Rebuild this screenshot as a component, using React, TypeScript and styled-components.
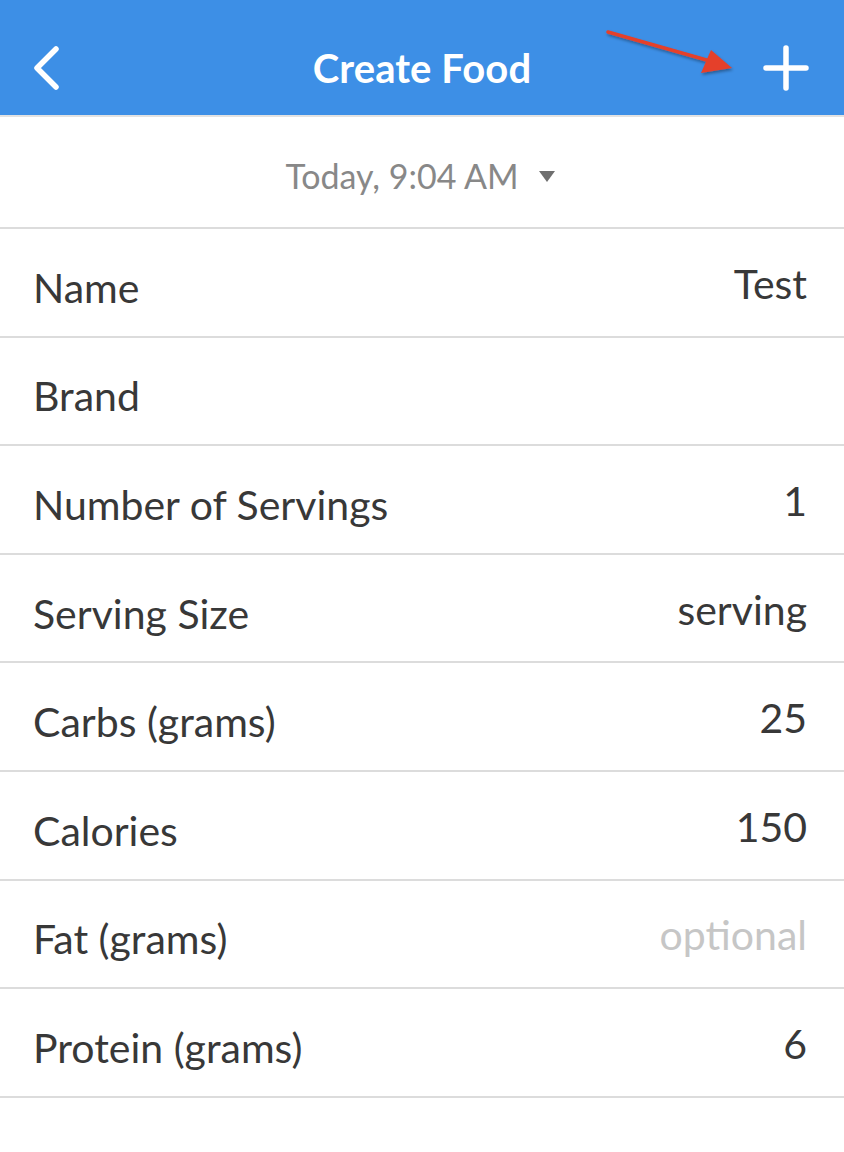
import * as React from 'react'
import styled, { createGlobalStyle } from 'styled-components'

interface Field {
  label: string
  value?: string
  placeholder?: string
}

const fields: Field[] = [
  { label: 'Name', value: 'Test' },
  { label: 'Brand' },
  { label: 'Number of Servings', value: '1' },
  { label: 'Serving Size', value: 'serving' },
  { label: 'Carbs (grams)', value: '25' },
  { label: 'Calories', value: '150' },
  { label: 'Fat (grams)', placeholder: 'optional' },
  { label: 'Protein (grams)', value: '6' },
]

const GlobalStyle = createGlobalStyle`
  html, body {
    margin: 0;
    padding: 0;
    background: #ffffff;
  }
  body {
    font-family: Lato, 'Open Sans', sans-serif;
    -webkit-font-smoothing: antialiased;
  }
`

const App: React.FC = () => {
  return (
    <>
      <GlobalStyle />
      <Screen>
        <Header>
          <IconButton aria-label="Back">
            <svg width="32" height="46" viewBox="0 0 32 46" fill="none">
              <path d="M26 4 L7 23 L26 42" stroke="#fff" strokeWidth="5.5" strokeLinecap="round" strokeLinejoin="round" />
            </svg>
          </IconButton>
          <Title>Create Food</Title>
          <IconButton aria-label="Add">
            <svg width="46" height="46" viewBox="0 0 46 46" fill="none">
              <path d="M23 3 V43 M3 23 H43" stroke="#fff" strokeWidth="5.5" strokeLinecap="round" />
            </svg>
          </IconButton>
          <Annotation width="140" height="60" viewBox="0 0 140 60">
            <defs>
              <filter id="shadow" x="-10%" y="-30%" width="120%" height="160%">
                <feDropShadow dx="1" dy="2" stdDeviation="1.5" floodColor="#000" floodOpacity="0.35" />
              </filter>
            </defs>
            <g filter="url(#shadow)">
              <line x1="8" y1="7" x2="110" y2="36" stroke="#e5402a" strokeWidth="3.5" strokeLinecap="round" />
              <polygon points="132,43 101,48 111,25" fill="#e5402a" />
            </g>
          </Annotation>
        </Header>

        <DateRow>
          <DateText>Today, 9:04 AM</DateText>
          <Caret />
        </DateRow>

        {fields.map((f) => (
          <Row key={f.label}>
            <Label>{f.label}</Label>
            {f.value ? <Value>{f.value}</Value> : f.placeholder ? <Value $muted>{f.placeholder}</Value> : null}
          </Row>
        ))}
      </Screen>
    </>
  )
}

export default App

const Screen = styled.div`
  width: 844px;
  min-height: 1152px;
  background: #ffffff;
  display: flex;
  flex-direction: column;
`

const Header = styled.header`
  position: relative;
  height: 117px;
  background: #3d8fe6;
  display: flex;
  align-items: center;
  justify-content: space-between;
  padding: 20px 35px 0 30px;
  box-sizing: border-box;
  border-bottom: 2px solid #e2e2e2;
`

const IconButton = styled.button`
  background: none;
  border: none;
  padding: 0;
  display: flex;
  align-items: center;
  justify-content: center;
  cursor: pointer;
`

const Title = styled.h1`
  position: absolute;
  left: 0;
  right: 0;
  top: 20px;
  bottom: 0;
  margin: 0;
  display: flex;
  align-items: center;
  justify-content: center;
  pointer-events: none;
  color: #ffffff;
  font-family: Lato, sans-serif;
  font-weight: 700;
  font-size: 40px;
  letter-spacing: 0.1px;
`

const Annotation = styled.svg`
  position: absolute;
  left: 600px;
  top: 25px;
  overflow: visible;
`

const DateRow = styled.div`
  height: 112px;
  box-sizing: border-box;
  border-bottom: 2px solid #dcdcdc;
  display: flex;
  align-items: center;
  justify-content: center;
  gap: 20px;
  padding-top: 6px;
  padding-right: 4px;
`

const DateText = styled.span`
  color: #888888;
  font-size: 34px;
  font-family: Lato, sans-serif;
`

const Caret = styled.span`
  width: 0;
  height: 0;
  border-left: 8px solid transparent;
  border-right: 8px solid transparent;
  border-top: 11px solid #6f6f6f;
  margin-top: 2px;
`

const Row = styled.div`
  height: 108.6px;
  box-sizing: border-box;
  border-bottom: 2px solid #dcdcdc;
  display: flex;
  align-items: center;
  justify-content: space-between;
  padding: 0 37px 0 33px;
`

const Label = styled.span`
  color: #383838;
  font-size: 41px;
  font-family: Lato, sans-serif;
  padding-top: 10px;
`

const Value = styled.span<{ $muted?: boolean }>`
  color: ${({ $muted }) => ($muted ? '#c6c6c6' : '#383838')};
  font-size: 41px;
  font-family: Lato, sans-serif;
  margin-top: 2px;
`
